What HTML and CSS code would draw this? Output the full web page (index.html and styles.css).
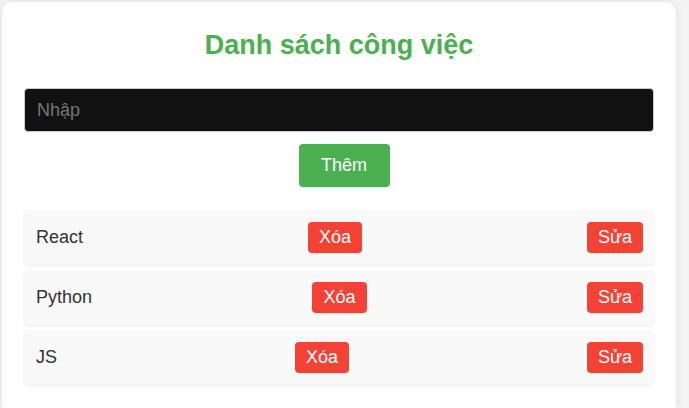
FILE: index.html
```html
<!DOCTYPE html>
<html lang="vi">
<head>
<meta charset="utf-8">
<title>Danh sách công việc</title>
<link rel="stylesheet" href="styles.css">
</head>
<body>
<div class="card">
  <h2 class="title">Danh sách công việc</h2>
  <input class="task-input" type="text" placeholder="Nhập">
  <div class="add-row"><button class="btn btn-add">Thêm</button></div>
  <ul class="list">
    <li class="item"><span class="item-text">React</span><button class="btn btn-red">Xóa</button><button class="btn btn-red">Sửa</button></li>
    <li class="item"><span class="item-text">Python</span><button class="btn btn-red">Xóa</button><button class="btn btn-red">Sửa</button></li>
    <li class="item"><span class="item-text">JS</span><button class="btn btn-red">Xóa</button><button class="btn btn-red">Sửa</button></li>
  </ul>
</div>
</body>
</html>
```
FILE: styles.css
```css
html, body {
  margin: 0;
  height: 100%;
}
body {
  background: #f4f4f4;
  padding: 2px 13px 0 2px;
  box-sizing: border-box;
  overflow: hidden;
  font-family: "Liberation Sans", Arial, sans-serif;
  font-size: 18px;
  display: flex;
  flex-direction: column;
}
.card {
  flex: 1;
  background: #fff;
  border-radius: 10px 10px 0 0;
  box-shadow: 0 0 10px rgba(0, 0, 0, 0.1);
  padding: 28px 22px 0;
  box-sizing: border-box;
  display: flex;
  flex-direction: column;
}
.title {
  margin: 0;
  font-size: 27px;
  font-weight: bold;
  color: #4caf50;
  text-align: center;
  line-height: 30px;
}
.task-input {
  margin-top: 28px;
  height: 44px;
  box-sizing: border-box;
  padding: 0 12px;
  background: #111;
  color: #fff;
  border: 1px solid #ccc;
  border-radius: 4px;
  font-family: inherit;
  font-size: 18px;
  outline: none;
}
.task-input::placeholder {
  color: #757575;
}
.add-row {
  display: flex;
  justify-content: center;
  margin-top: 12px;
}
.btn {
  border: none;
  border-radius: 4px;
  color: #fff;
  font-family: inherit;
  font-size: 18px;
  line-height: 21px;
  cursor: pointer;
}
.btn-add {
  background: #4caf50;
  padding: 11px 0;
  width: 91px;
  height: 43px;
  margin-left: 10px;
}
.list {
  list-style: none;
  margin: 23px 0 0;
  padding: 0;
  display: flex;
  flex-direction: column;
  gap: 5px;
}
.item {
  display: flex;
  justify-content: space-between;
  align-items: center;
  background: #f9f9f9;
  border-radius: 5px;
  padding: 12px 11px 12px 12px;
  box-shadow: 0 1px 3px rgba(0, 0, 0, 0.08);
}
.item-text {
  font-size: 18px;
  color: #333;
}
.btn-red {
  background: #f44336;
  padding: 5px 11px;
  height: 31px;
}
```
